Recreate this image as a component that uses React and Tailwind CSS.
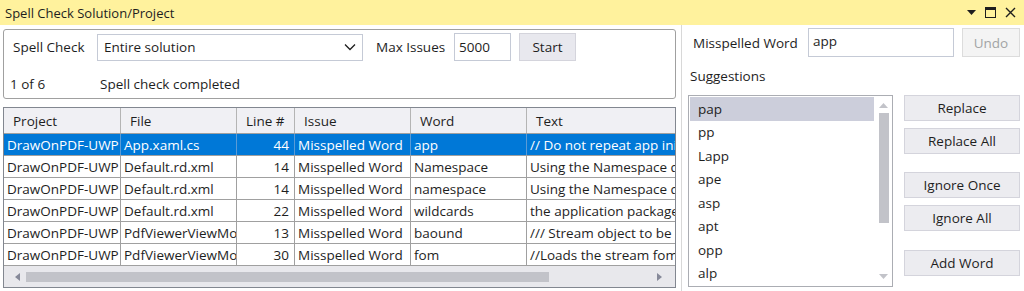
import React from "react";

const rows = [
  ["DrawOnPDF-UWP", "App.xaml.cs", "44", "Misspelled Word", "app", "// Do not repeat app initialization"],
  ["DrawOnPDF-UWP", "Default.rd.xml", "14", "Misspelled Word", "Namespace", "Using the Namespace directive"],
  ["DrawOnPDF-UWP", "Default.rd.xml", "14", "Misspelled Word", "namespace", "Using the Namespace directive"],
  ["DrawOnPDF-UWP", "Default.rd.xml", "22", "Misspelled Word", "wildcards", "the application package's"],
  ["DrawOnPDF-UWP", "PdfViewerViewModel.cs", "13", "Misspelled Word", "baound", "/// Stream object to be bound"],
  ["DrawOnPDF-UWP", "PdfViewerViewModel.cs", "30", "Misspelled Word", "fom", "//Loads the stream fom"],
];

const cols = "grid-cols-[117px_116px_58px_116px_116px_1fr]";

function Btn({ children, className = "" }) {
  return (
    <div className={"w-[116px] h-[26px] flex items-center justify-center bg-[#ececf0] border border-[#d4d4dc] text-[#1e1e1e] " + className}>
      {children}
    </div>
  );
}

export default function App() {
  const suggestions = ["pap", "pp", "Lapp", "ape", "asp", "apt", "opp", "alp"];
  return (
    <div
      className="w-[1024px] h-[291px] overflow-hidden bg-white text-[13.5px] text-[#1e1e1e] leading-[18px]"
      style={{ fontFamily: '"Open Sans", "Noto Sans", sans-serif' }}
    >
      {/* title bar */}
      <div className="h-[25px] bg-[#fff29d] flex items-center justify-between pl-[5px] pr-[8px]">
        <span className="text-[13px]">Spell Check Solution/Project</span>
        <div className="flex items-center gap-[9px] text-[#1e1e1e]">
          <svg width="9" height="6" viewBox="0 0 9 6"><polygon points="0,0 9,0 4.5,5" fill="#1e1e1e" /></svg>
          <svg width="11" height="11" viewBox="0 0 11 11"><rect x="0.5" y="0.5" width="10" height="10" fill="none" stroke="#1e1e1e" /><rect x="0" y="0" width="11" height="3" fill="#1e1e1e" /></svg>
          <svg width="11" height="11" viewBox="0 0 11 11"><path d="M1 1 L10 10 M10 1 L1 10" stroke="#1e1e1e" strokeWidth="1.4" /></svg>
        </div>
      </div>

      <div className="flex h-[266px]">
        {/* left column */}
        <div className="w-[681px] pl-[3px] flex flex-col">
          {/* group box */}
          <div className="mt-[4px] w-[673px] h-[70px] border border-[#a0a0a0] rounded-[3px] flex flex-col">
            <div className="flex items-center mt-[3px] h-[28px]">
              <span className="ml-[9px] w-[84px]">Spell Check</span>
              <div className="w-[266px] h-[27px] border border-[#c5cad6] bg-white flex items-center justify-between pl-[6px] pr-[6px]">
                <span>Entire solution</span>
                <svg width="12" height="8" viewBox="0 0 12 8"><path d="M1 1.5 L6 6.5 L11 1.5" fill="none" stroke="#1e1e1e" strokeWidth="1.3" /></svg>
              </div>
              <span className="ml-[13px] w-[78px]">Max Issues</span>
              <div className="w-[57px] h-[28px] border border-[#c5cad6] flex items-center pl-[4px]">5000</div>
              <div className="ml-[8px] w-[57px] h-[28px] bg-[#e8e8ee] border border-[#d4d4dc] flex items-center justify-center">Start</div>
            </div>
            <div className="flex items-center mt-[13px] h-[20px]">
              <span className="ml-[6px] w-[90px]">1 of 6</span>
              <span>Spell check completed</span>
            </div>
          </div>

          {/* table */}
          <div className="mt-[8px] w-[673px] h-[181px] border border-[#828790] flex flex-col overflow-hidden">
            <div className={"grid " + cols + " h-[26px] bg-[#f0f0f4] border-b border-[#a0a0a0]"}>
              {["Project", "File", "Line #", "Issue", "Word", "Text"].map((h, i) => (
                <div key={h} className={"flex items-center pl-[9px] " + (i < 5 ? "border-r border-[#b4b4b4]" : "")}>{h}</div>
              ))}
            </div>
            {rows.map((r, ri) => {
              const sel = ri === 0;
              return (
                <div
                  key={ri}
                  className={"grid " + cols + " h-[22px] border-b border-[#a0a0a0] " + (sel ? "bg-[#0078d7] text-white" : "bg-white")}
                >
                  {r.map((c, ci) => (
                    <div
                      key={ci}
                      className={
                        "flex items-center overflow-hidden whitespace-nowrap " +
                        (ci === 2 ? "justify-end pr-[5px] " : "pl-[3px] ") +
                        (ci < 5 ? (sel ? "border-r border-[#5a9bd6]" : "border-r border-[#a0a0a0]") : "")
                      }
                    >
                      {c}
                    </div>
                  ))}
                </div>
              );
            })}
            {/* horizontal scrollbar */}
            <div className="flex-1 bg-[#e8e8ec] flex items-center">
              <svg className="ml-[11px]" width="5" height="8" viewBox="0 0 5 8"><polygon points="5,0 5,8 0,4" fill="#868999" /></svg>
              <div className="ml-[6px] w-[523px] h-[10px] bg-[#c2c3c9]" />
              <div className="flex-1" />
              <svg className="mr-[13px]" width="5" height="8" viewBox="0 0 5 8"><polygon points="0,0 0,8 5,4" fill="#868999" /></svg>
            </div>
          </div>
        </div>

        {/* separator */}
        <div className="w-[1px] bg-[#d8d8d8]" />

        {/* right column */}
        <div className="pl-[6px] flex flex-col">
          <div className="mt-[3px] flex items-center h-[29px]">
            <span className="ml-[5px] w-[115px]">Misspelled Word</span>
            <div className="w-[146px] h-[29px] border border-[#c5cad6] pl-[4px] pt-[3px]">app</div>
            <div className="ml-[8px] w-[58px] h-[29px] bg-[#f4f4f4] border border-[#dcdcdc] text-[#a2a4a5] flex items-center justify-center">Undo</div>
          </div>
          <div className="mt-[9px] h-[20px] flex items-center ml-[2px]">Suggestions</div>
          <div className="mt-[9px] flex">
            <div className="w-[205px] h-[192px] border border-[#abadb3] flex p-[1px]">
              <div className="flex-1 flex flex-col">
                {suggestions.map((s, i) => (
                  <div key={s} className={"h-[23.5px] leading-[16px] flex items-center pl-[8px] " + (i === 0 ? "bg-[#cccedb]" : "")}>{s}</div>
                ))}
              </div>
              <div className="w-[15px] ml-[2px] flex flex-col items-center bg-white">
                <svg className="mt-[6px]" width="9" height="5" viewBox="0 0 9 5"><polygon points="0,5 9,5 4.5,0" fill="#c2c3c9" /></svg>
                <div className="mt-[5px] w-[10px] h-[110px] bg-[#c2c3c9]" />
                <div className="flex-1" />
                <svg className="mb-[6px]" width="9" height="5" viewBox="0 0 9 5"><polygon points="0,0 9,0 4.5,5" fill="#c2c3c9" /></svg>
              </div>
            </div>
            <div className="ml-[11px] flex flex-col">
              <Btn>Replace</Btn>
              <Btn className="mt-[7px]">Replace All</Btn>
              <Btn className="mt-[18px]">Ignore Once</Btn>
              <Btn className="mt-[7px]">Ignore All</Btn>
              <Btn className="mt-[19px]">Add Word</Btn>
            </div>
          </div>
        </div>
      </div>
    </div>
  );
}
